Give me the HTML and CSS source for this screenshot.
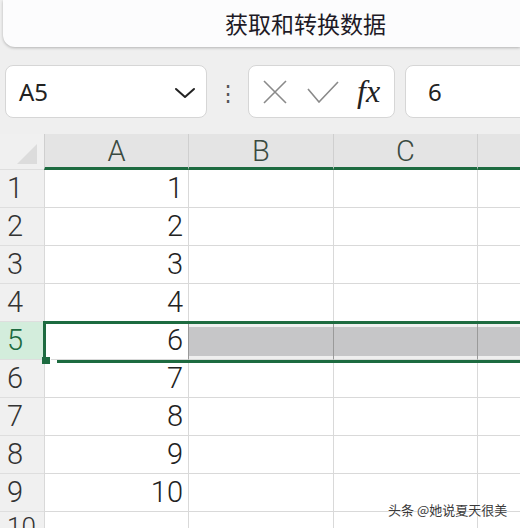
FILE: index.html
```html
<!DOCTYPE html>
<html lang="zh">

<head>
  <meta charset="UTF-8">
  <meta name="viewport" content="width=device-width, initial-scale=1.0">
  <title>获取和转换数据</title>
  <link rel="stylesheet" href="styles.css">
</head>

<body>
<div class="ribbon">获取和转换数据</div>

<div class="toolbar">
  <div class="box name-box">
    <span>A5</span>
    <svg class="chevron" width="22" height="12" viewBox="0 0 22 12">
      <path d="M2 2 L11 10 L20 2" fill="none" stroke="#222" stroke-width="2" stroke-linecap="round" stroke-linejoin="round"/>
    </svg>
  </div>
  <div class="dots">⋮</div>
  <div class="box fx-box">
    <svg width="24" height="24" viewBox="0 0 24 24">
      <path d="M1 1 L23 23 M23 1 L1 23" stroke="#8a8a8a" stroke-width="1.6" fill="none"/>
    </svg>
    <svg width="32" height="22" viewBox="0 0 32 22">
      <path d="M1 8 L12 21 L31 1" stroke="#8a8a8a" stroke-width="1.6" fill="none"/>
    </svg>
    <span class="fx">fx</span>
  </div>
  <div class="box value-box">6</div>
</div>

<div class="sheet">
  <div class="grid">
    <div class="corner"><span class="tri"></span></div>
    <div class="col-head">A</div>
    <div class="col-head">B</div>
    <div class="col-head">C</div>
    <div class="col-head"></div>

    <div class="row-head">1</div><div class="cell num">1</div><div class="cell"></div><div class="cell"></div><div class="cell"></div>
    <div class="row-head">2</div><div class="cell num">2</div><div class="cell"></div><div class="cell"></div><div class="cell"></div>
    <div class="row-head">3</div><div class="cell num">3</div><div class="cell"></div><div class="cell"></div><div class="cell"></div>
    <div class="row-head">4</div><div class="cell num">4</div><div class="cell"></div><div class="cell"></div><div class="cell"></div>
    <div class="row-head active">5</div><div class="cell num">6</div><div class="cell sel"></div><div class="cell sel"></div><div class="cell sel"></div>
    <div class="row-head">6</div><div class="cell num">7</div><div class="cell"></div><div class="cell"></div><div class="cell"></div>
    <div class="row-head">7</div><div class="cell num">8</div><div class="cell"></div><div class="cell"></div><div class="cell"></div>
    <div class="row-head">8</div><div class="cell num">9</div><div class="cell"></div><div class="cell"></div><div class="cell"></div>
    <div class="row-head">9</div><div class="cell num">10</div><div class="cell"></div><div class="cell"></div><div class="cell"></div>
    <div class="row-head last">10</div><div class="cell num"></div><div class="cell"></div><div class="cell"></div><div class="cell"></div>
  </div>
  <div class="selection"></div>
  <div class="handle"></div>
  <div class="watermark">头条 @她说夏天很美</div>
</div>
</body>

</html>
```

FILE: styles.css
```css
body {
  margin: 0;
  width: 520px;
  height: 528px;
  overflow: hidden;
  background: #efefef;
  font-family: 'Noto Sans', 'Noto Sans CJK SC', sans-serif;
  color: #222;
}

.ribbon {
  margin-left: 3px;
  height: 47px;
  padding-left: 222px;
  background: #fcfcfd;
  border-bottom-left-radius: 12px;
  box-shadow: 0 1px 3px rgba(0, 0, 0, 0.25);
  font-family: 'Noto Sans CJK SC', sans-serif;
  font-size: 23px;
  line-height: 46px;
  color: #1e1a26;
}

.toolbar {
  display: flex;
  align-items: center;
  margin-top: 18px;
  height: 53px;
}

.box {
  box-sizing: border-box;
  height: 53px;
  background: #fff;
  border: 1px solid #d6d6d6;
  border-radius: 8px;
  display: flex;
  align-items: center;
}

.name-box {
  width: 202px;
  margin-left: 5px;
  padding: 0 10px 0 13px;
  justify-content: space-between;
  font-size: 24px;
}

.chevron {
  margin-top: 2px;
}

.dots {
  width: 41px;
  text-align: center;
  font-size: 22px;
  color: #555;
}

.fx-box {
  width: 147px;
  padding: 0 10px 0 14px;
  gap: 20px;
}

.fx {
  font-family: 'Liberation Serif', serif;
  font-style: italic;
  font-size: 32px;
  color: #222;
  margin-left: -2px;
}

.value-box {
  flex: 1;
  margin-left: 10px;
  margin-right: -12px;
  padding-left: 22px;
  font-size: 24px;
}

.sheet {
  position: relative;
  margin-top: 16px;
}

.grid {
  display: grid;
  grid-template-columns: 44px 144px 145px 144px 1fr;
  grid-template-rows: 36px repeat(10, 38px);
  font-family: 'Roboto', 'Noto Sans', sans-serif;
  font-weight: 300;
  font-size: 29px;
  color: #222;
}

.corner {
  background: #f0f0f0;
  border-bottom: 1px solid #dedede;
  position: relative;
}

.tri {
  position: absolute;
  right: 7px;
  bottom: 5px;
  width: 0;
  height: 0;
  border-left: 20px solid transparent;
  border-bottom: 20px solid #dcdcdc;
}

.col-head {
  background: #e4e4e4;
  border-left: 1px solid #cfcfcf;
  border-bottom: 3px solid #1d6b40;
  text-align: center;
  line-height: 34px;
  color: #3a4a40;
}

.row-head {
  background: #f0f0f0;
  border-bottom: 1px solid #dedede;
  padding-left: 7px;
  line-height: 37px;
  color: #333;
  overflow: hidden;
}

.row-head.active {
  background: #d3eddc;
  color: #1d6b40;
}

.row-head.last {
  line-height: 30px;
  font-size: 26px;
  white-space: nowrap;
}

.cell {
  background: #fff;
  border-left: 1px solid #d9d9d9;
  border-bottom: 1px solid #d9d9d9;
}

.num {
  text-align: right;
  padding-right: 5px;
  line-height: 37px;
}

.cell.sel {
  background: #c6c6c8;
  background-clip: content-box;
  padding: 5px 0 3px;
  box-sizing: border-box;
  border-left-color: #9a9a9a;
}

.selection {
  position: absolute;
  top: 187px;
  left: 43px;
  right: -6px;
  height: 36px;
  border: 3px solid #1d6b40;
  border-bottom: none;
  pointer-events: none;
}

.selection::after {
  content: "";
  position: absolute;
  left: 11px;
  right: 0;
  bottom: -3px;
  height: 3px;
  background: #1d6b40;
}

.handle {
  position: absolute;
  top: 223px;
  left: 42px;
  width: 8px;
  height: 7px;
  background: #1d6b40;
  border-right: 1px solid #fff;
}

.watermark {
  position: absolute;
  top: 366px;
  left: 388px;
  font-family: 'Noto Sans CJK SC', sans-serif;
  font-size: 13px;
  color: #3a3a3a;
  text-shadow: 0 0 2px #fff, 0 0 2px #fff;
}
```
